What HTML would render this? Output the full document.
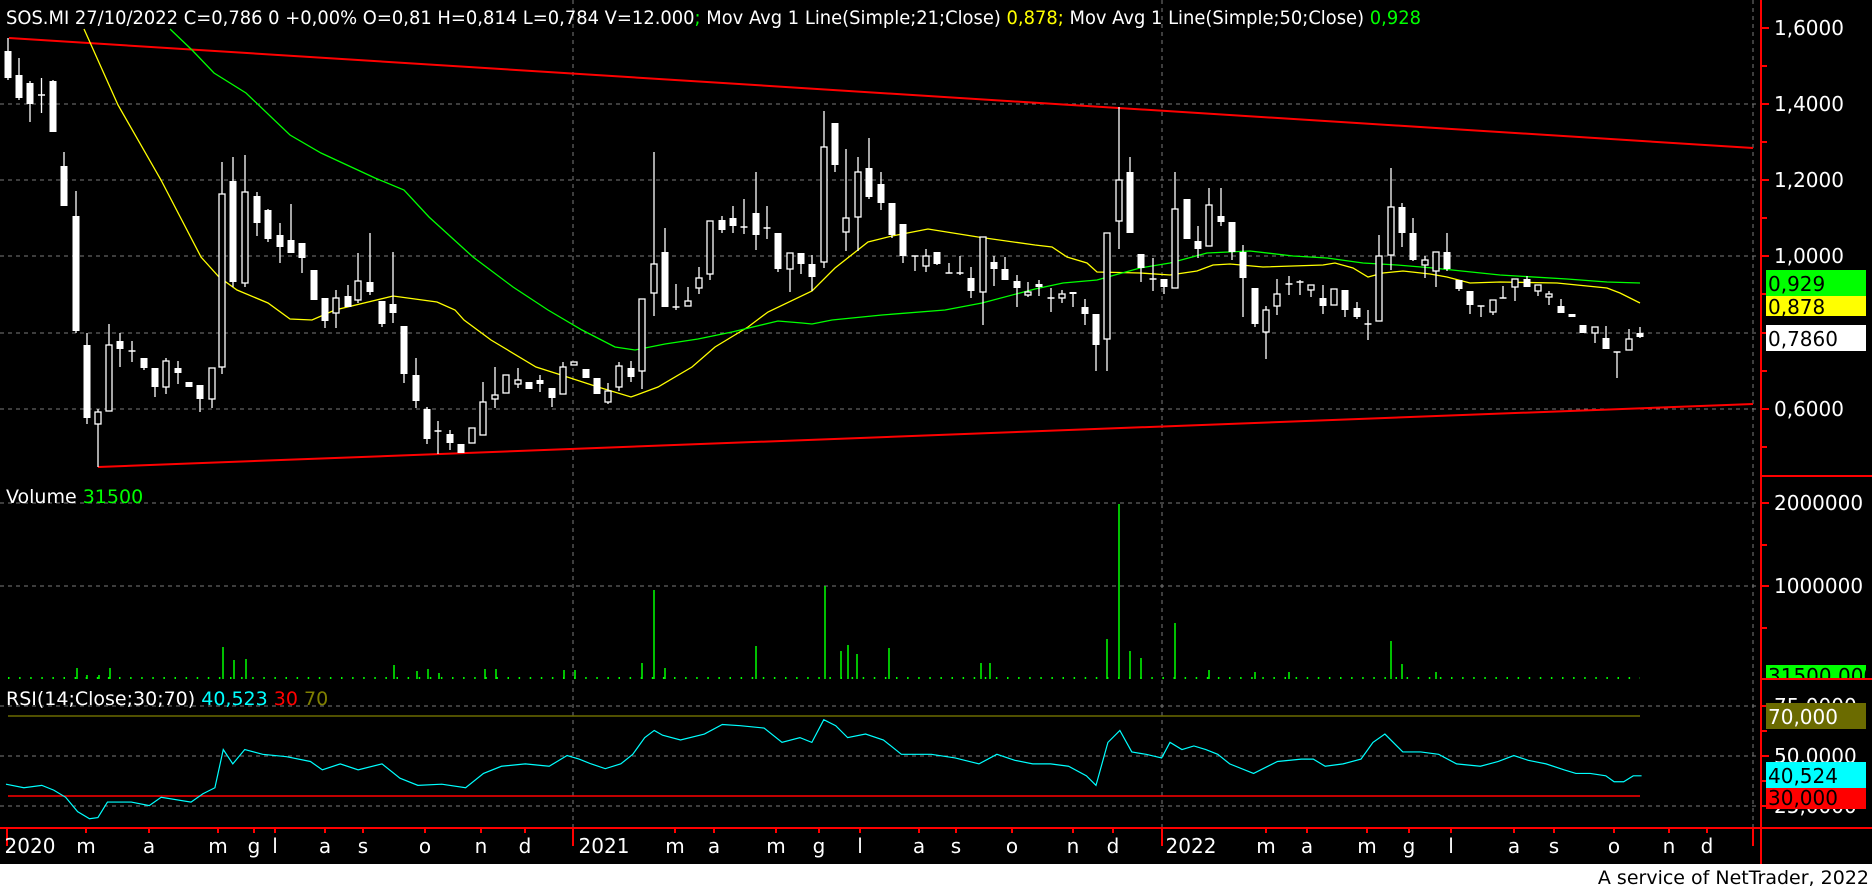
<!DOCTYPE html>
<html><head><meta charset="utf-8"><style>
html,body{margin:0;padding:0;background:#fff;}
svg{display:block}
.f{fill:#fff}
.h{fill:#000;stroke:#fff;stroke-width:1.3}
text{font-family:"DejaVu Sans","Liberation Sans",sans-serif}
</style></head><body>
<svg width="1872" height="888" viewBox="0 0 1872 888" xmlns="http://www.w3.org/2000/svg">
<rect x="0" y="0" width="1872" height="864" fill="#000"/>
<rect x="0" y="864" width="1872" height="24" fill="#fff"/>
<!-- grid -->
<g stroke="#7a7a7a" stroke-width="1" stroke-dasharray="4 4" fill="none">
<path d="M0 104H1761M0 180H1761M0 256H1761M0 333H1761M0 409H1761M0 503H1761M0 586H1761M0 706H1761M0 756H1761M0 806H1761"/>
<path d="M573 0V828M1162 0V828M1753 0V828"/>
</g>
<!-- axes -->
<g stroke="#f00" stroke-width="2" fill="none">
<path d="M1761 0V864"/>
<path d="M1761 476H1872M1761 679H1872M0 828H1872"/>
<path d="M1761 28h8M1761 66h6M1761 104h8M1761 142h6M1761 180h8M1761 218h6M1761 256h8M1761 294h6M1761 333h8M1761 371h6M1761 409h8M1761 447h6M1761 503h8M1761 545h6M1761 586h8M1761 628h6M1761 706h8M1761 731h6M1761 756h8M1761 781h6M1761 806h8"/>
<path d="M7 828v18M86 828v5M149 828v5M218 828v5M254 828v5M275 828v5M325 828v5M363 828v5M425 828v5M481 828v5M525 828v5M573 828v18M675 828v5M714 828v5M776 828v5M819 828v5M860 828v5M919 828v5M956 828v5M1012 828v5M1073 828v5M1113 828v5M1162 828v18M1266 828v5M1307 828v5M1367 828v5M1409 828v5M1451 828v5M1514 828v5M1554 828v5M1614 828v5M1669 828v5M1707 828v5M1753 828v18"/>
</g>
<!-- channel lines -->
<path d="M9 38L1753 148" stroke="#f00" stroke-width="2"/>
<path d="M98 467L1753 404" stroke="#f00" stroke-width="2"/>
<!-- MAs -->
<polyline fill="none" stroke="#ff0" stroke-width="1.3" points="84,29 118,105 161,180 201,257 219,277 237,290 268,303 290,319 312,320 335,310 393,296 437,302 455,310 464,320 491,340 536,367 558,374 598,387 631,397 658,387 692,367 715,347 748,327 768,312 812,291 835,268 868,242 892,236 928,229 978,237 1035,245 1052,247 1067,257 1087,263 1097,272 1140,273 1170,275 1197,271 1213,265 1230,264 1263,267 1323,265 1335,263 1353,268 1368,277 1383,273 1403,271 1430,274 1447,277 1470,283 1500,282 1557,283 1607,288 1620,293 1640,303"/>
<polyline fill="none" stroke="#0f0" stroke-width="1.3" points="170,29 192,50 214,73 246,93 290,135 321,153 375,178 404,190 429,217 473,257 513,287 548,310 582,330 615,347 635,350 665,344 698,339 732,332 778,321 802,323 812,324 832,320 882,315 945,310 982,303 1035,289 1063,283 1097,280 1140,268 1170,263 1207,253 1250,251 1293,256 1327,258 1363,263 1397,265 1433,268 1500,275 1567,279 1607,282 1640,283"/>
<!-- wicks -->
<path stroke="#fff" stroke-width="1.3" fill="none" d="M8 38V80M19 58V100M30 81V122M41.5 78V113M53 80V132M64 152V206M76 191V333M87 333V424M98 409V467M109 324V411M120 333V367M132 341V362M144 358V370M155 368V397M166 358V394M178 361V384M189 382V387M200 385V412M212 368V408M222 162V374M233 157V287M245 155V287M257 192V236M268 209V242M280 223V263M291 204V253M302 243V273M314 270V300M325 298V328M336 290V328M348 285V307M358 253V303M370 233V295M382 301V327M393 252V323M404 326V383M416 358V408M427 407V444M438 421V454M450 430V450M461 444V453M472 428V443M483 382V435M495 367V408M506 375V393
M518 368V388M529 382V389M540 375V392M552 388V407M563 362V394M574 362V365M586 369V378M597 378V394M608 383V404M619 362V391M631 361V382M642 299V389M654 152V316M665 228V307M676 284V310M688 287V306M699 267V294M710 221V280M722 216V233M733 206V233M744 199V234M756 172V250M767 206V239M778 233V272M790 253V292M801 253V274M812 255V291M824 111V268M835 123V172M846 149V251M858 157V251M869 138V199M881 172V210M892 203V238M903 224V263M915 256V271M926 249V272M937 252V265M949 263V273M960 256V275M971 267V298M983 237V325M994 256V286M1005 257V280M1017 275V307M1028 282V297M1039 280V296M1051 288V312M1062 290V303M1073 292V307M1085 299V325M1096 314V371M1107 233V371M1119 107V249M1130 157V233M1141 254V282M1153 258V291M1164 279V294M1175 172V288M1187 199V239M1198 226V258M1209 188V246M1221 188V226M1232 222V260M1243 245V317M1255 288V327M1266 306V359M1277 279V315M1289 276V295M1300 280V295M1311 285V297M1323 285V314M1334 289V305M1345 290V317M1357 302V319M1368 310V340M1379 235V321M1391 168V270M1402 203V247M1413 218V261M1425 256V278M1436 252V287M1447 233V271M1459 280V291M1470 291V314M1481 306V317M1493 300V315M1503 286V298M1515 279V301M1527 276V287M1538 285V296M1549 291V305M1561 299V313M1572 314V316M1583 325V333M1595 327V343M1606 326V349M1617 352V378M1629 329V350M1640 327V338"/>
<!-- crosses -->
<path stroke="#fff" stroke-width="1.5" d="M38 95h7M128.5 351h7M434.5 431h7M672.5 307h7M740.5 227h7M763.5 228h7M911.5 256h7M945.5 273h7M956.5 273h7M1047.5 298h7M1149.5 279h7M1285.5 284h7M1296.5 282h7M1364.5 324h7M1477.5 306h7M1499.5 298h7M1613.5 352h7"/>
<!-- filled bodies -->
<g class="f">
<rect x="4.5" y="51" width="7" height="27"/><rect x="15.5" y="75" width="7" height="23"/><rect x="26.5" y="83" width="7" height="21"/><rect x="49.5" y="81" width="7" height="51"/><rect x="60.5" y="166" width="7" height="40"/><rect x="72.5" y="216" width="7" height="115"/><rect x="83.5" y="345" width="7" height="73"/><rect x="116.5" y="341" width="7" height="8"/><rect x="140.5" y="358" width="7" height="10"/><rect x="151.5" y="368" width="7" height="19"/><rect x="174.5" y="368" width="7" height="5"/><rect x="185.5" y="382" width="7" height="5"/><rect x="196.5" y="385" width="7" height="14"/><rect x="229.5" y="181" width="7" height="101"/><rect x="253.5" y="196" width="7" height="27"/><rect x="264.5" y="210" width="7" height="29"/><rect x="276.5" y="235" width="7" height="12"/><rect x="287.5" y="240" width="7" height="13"/><rect x="298.5" y="243" width="7" height="15"/><rect x="310.5" y="270" width="7" height="30"/><rect x="321.5" y="298" width="7" height="23"/><rect x="344.5" y="296" width="7" height="11"/><rect x="366.5" y="282" width="7" height="10"/><rect x="378.5" y="301" width="7" height="23"/><rect x="389.5" y="304" width="7" height="9"/><rect x="400.5" y="326" width="7" height="48"/><rect x="412.5" y="375" width="7" height="26"/><rect x="423.5" y="409" width="7" height="30"/><rect x="446.5" y="434" width="7" height="9"/><rect x="457.5" y="444" width="7" height="9"/>
<rect x="525.5" y="382" width="7" height="7"/><rect x="536.5" y="380" width="7" height="4"/><rect x="548.5" y="388" width="7" height="10"/><rect x="582.5" y="369" width="7" height="9"/><rect x="593.5" y="378" width="7" height="16"/><rect x="627.5" y="368" width="7" height="9"/><rect x="661.5" y="252" width="7" height="55"/><rect x="718.5" y="220" width="7" height="10"/><rect x="729.5" y="218" width="7" height="8"/><rect x="752.5" y="213" width="7" height="22"/><rect x="774.5" y="233" width="7" height="36"/><rect x="797.5" y="253" width="7" height="11"/><rect x="808.5" y="264" width="7" height="13"/><rect x="831.5" y="123" width="7" height="42"/><rect x="865.5" y="168" width="7" height="29"/><rect x="877.5" y="184" width="7" height="19"/><rect x="888.5" y="203" width="7" height="32"/><rect x="899.5" y="224" width="7" height="32"/><rect x="933.5" y="252" width="7" height="12"/><rect x="967.5" y="278" width="7" height="13"/><rect x="990.5" y="262" width="7" height="7"/><rect x="1001.5" y="269" width="7" height="11"/><rect x="1013.5" y="281" width="7" height="7"/><rect x="1035.5" y="284" width="7" height="3"/><rect x="1069.5" y="292" width="7" height="2"/><rect x="1081.5" y="307" width="7" height="7"/><rect x="1092.5" y="314" width="7" height="31"/><rect x="1126.5" y="172" width="7" height="61"/><rect x="1137.5" y="254" width="7" height="14"/><rect x="1160.5" y="279" width="7" height="8"/><rect x="1183.5" y="199" width="7" height="40"/><rect x="1194.5" y="241" width="7" height="8"/><rect x="1217.5" y="216" width="7" height="6"/><rect x="1228.5" y="222" width="7" height="30"/><rect x="1239.5" y="252" width="7" height="26"/><rect x="1251.5" y="288" width="7" height="36"/><rect x="1319.5" y="298" width="7" height="8"/><rect x="1341.5" y="290" width="7" height="20"/><rect x="1353.5" y="308" width="7" height="9"/><rect x="1398.5" y="207" width="7" height="26"/><rect x="1409.5" y="233" width="7" height="27"/><rect x="1443.5" y="252" width="7" height="17"/><rect x="1455.5" y="280" width="7" height="9"/><rect x="1466.5" y="291" width="7" height="14"/><rect x="1523.5" y="279" width="7" height="8"/><rect x="1557.5" y="306" width="7" height="7"/><rect x="1568.5" y="314" width="7" height="3"/><rect x="1579.5" y="325" width="7" height="8"/><rect x="1602.5" y="338" width="7" height="11"/><rect x="1636.5" y="333" width="7" height="4"/>
</g>
<!-- hollow bodies -->
<g class="h">
<rect x="95" y="412" width="6" height="12"/><rect x="106" y="345" width="6" height="66"/><rect x="163" y="361" width="6" height="26"/><rect x="209" y="368" width="6" height="31"/><rect x="219" y="194" width="6" height="173"/><rect x="242" y="192" width="6" height="91"/><rect x="333" y="298" width="6" height="15"/><rect x="355" y="281" width="6" height="19"/><rect x="469" y="428" width="6" height="15"/><rect x="480" y="402" width="6" height="33"/><rect x="492" y="395" width="6" height="4"/><rect x="503" y="375" width="6" height="18"/>
<rect x="515" y="380" width="6" height="4"/><rect x="560" y="367" width="6" height="27"/><rect x="571" y="362" width="6" height="3"/><rect x="605" y="391" width="6" height="11"/><rect x="616" y="366" width="6" height="21"/><rect x="639" y="299" width="6" height="72"/><rect x="651" y="264" width="6" height="29"/><rect x="685" y="301" width="6" height="5"/><rect x="696" y="278" width="6" height="10"/><rect x="707" y="221" width="6" height="53"/><rect x="787" y="253" width="6" height="16"/><rect x="821" y="147" width="6" height="115"/><rect x="843" y="218" width="6" height="14"/><rect x="855" y="172" width="6" height="45"/><rect x="923" y="256" width="6" height="10"/><rect x="980" y="237" width="6" height="55"/><rect x="1025" y="292" width="6" height="3"/><rect x="1059" y="294" width="6" height="4"/><rect x="1104" y="233" width="6" height="106"/><rect x="1116" y="180" width="6" height="41"/><rect x="1172" y="209" width="6" height="79"/><rect x="1206" y="205" width="6" height="41"/><rect x="1263" y="310" width="6" height="22"/><rect x="1274" y="294" width="6" height="12"/><rect x="1308" y="285" width="6" height="5"/><rect x="1331" y="289" width="6" height="16"/><rect x="1376" y="256" width="6" height="65"/><rect x="1388" y="207" width="6" height="48"/><rect x="1422" y="260" width="6" height="5"/><rect x="1433" y="252" width="6" height="19"/><rect x="1490" y="300" width="6" height="12"/><rect x="1512" y="279" width="6" height="8"/><rect x="1535" y="285" width="6" height="6"/><rect x="1546" y="294" width="6" height="3"/><rect x="1592" y="327" width="6" height="6"/><rect x="1626" y="339" width="6" height="11"/>
</g>
<!-- volume -->
<line x1="8" y1="678" x2="1640" y2="678" stroke="#0f0" stroke-width="2" stroke-dasharray="1.5 9.6"/>
<path stroke="#0f0" stroke-width="1.5" d="M77 679V668M87 679V675M99 679V675M110 679V668M223 679V647M234 679V660M246 679V659M394 679V665M417 679V671M428 679V669M439 679V673M485 679V669M496 679V669M564 679V670M575 679V670M642 679V663M654 679V590M665 679V668M756 679V646M825 679V586M841 679V651M848 679V645M857 679V654M889 679V648M981 679V663M990 679V663M1107 679V639M1119 679V504M1130 679V651M1141 679V658M1175 679V623M1209 679V670M1391 679V641M1402 679V664M1436 679V672M1255 679V672M1289 679V672"/>
<!-- RSI -->
<line x1="8" y1="716" x2="1640" y2="716" stroke="#6b6b00" stroke-width="1.5"/>
<line x1="8" y1="796" x2="1640" y2="796" stroke="#f00" stroke-width="1.5"/>
<g transform="scale(1.19388,1.19355)">
<polyline fill="none" stroke="#0ff" stroke-width="1" points="5,657 20,660 35,658 45,662 55,668 65,680 75,686 82,685 90,672 110,672 125,675 135,668 160,672 170,665 180,660 187,628 195,640 205,628 220,632 240,634 260,638 270,645 285,640 300,645 320,640 335,652 350,658 370,657 390,660 405,648 420,642 440,640 460,642 475,633 485,636 495,640 507,644 520,640 530,632 540,618 548,612 555,616 570,620 590,615 605,607 620,608 640,610 655,622 670,618 680,622 690,603 700,608 710,618 725,615 740,620 755,632 780,632 800,635 820,640 835,632 850,637 865,640 880,640 895,642 910,650 918,658 928,622 938,612 948,630 960,632 973,635 980,622 990,628 1000,625 1010,628 1020,632 1030,640 1050,648 1070,638 1090,636 1100,636 1110,642 1125,640 1140,636 1150,622 1160,615 1175,630 1190,630 1205,632 1220,640 1240,642 1255,638 1268,633 1280,637 1295,640 1310,645 1320,648 1332,648 1345,650 1352,655 1360,655 1368,650 1375,650"/>
</g>
<!-- header -->
<text x="6" y="24" font-size="19" fill="#fff" textLength="1415" lengthAdjust="spacingAndGlyphs">SOS.MI 27/10/2022 C=0,786 0 +0,00% O=0,81 H=0,814 L=0,784 V=12.000<tspan fill="#0f0">;</tspan> Mov Avg 1 Line(Simple;21;Close) <tspan fill="#ff0">0,878</tspan><tspan fill="#ff0">;</tspan> Mov Avg 1 Line(Simple;50;Close) <tspan fill="#0f0">0,928</tspan></text>
<text x="6" y="503" font-size="19" fill="#fff">Volume <tspan fill="#0f0">31500</tspan></text>
<text x="6" y="705" font-size="19" fill="#fff">RSI(14;Close;30;70) <tspan fill="#0ff">40,523</tspan> <tspan fill="#f00">30</tspan> <tspan fill="#808000">70</tspan></text>
<!-- right labels -->
<g font-size="20" fill="#fff">
<text x="1774" y="35">1,6000</text><text x="1774" y="111">1,4000</text><text x="1774" y="187">1,2000</text><text x="1774" y="263">1,0000</text><text x="1774" y="416">0,6000</text>
<text x="1774" y="510">2000000</text><text x="1774" y="593">1000000</text>
<text x="1774" y="713">75,0000</text><text x="1774" y="763">50,0000</text><text x="1774" y="813">25,0000</text>
</g>
<rect x="1766" y="270" width="100" height="26" fill="#0f0"/><text x="1768" y="291" font-size="20" fill="#000">0,929</text>
<rect x="1766" y="296" width="100" height="20" fill="#ff0"/><text x="1768" y="314" font-size="20" fill="#000">0,878</text>
<rect x="1766" y="325" width="100" height="26" fill="#fff"/><text x="1768" y="346" font-size="20" fill="#000">0,7860</text>
<rect x="1766" y="665" width="100" height="13" fill="#0f0"/><text x="1768" y="683" font-size="20" fill="#000" clip-path="url(#c1)">31500,000</text>
<clipPath id="c1"><rect x="1766" y="665" width="100" height="13"/></clipPath>
<rect x="1766" y="703" width="100" height="26" fill="#6b6b00"/><text x="1768" y="724" font-size="20" fill="#fff">70,000</text>
<rect x="1766" y="762" width="100" height="26" fill="#0ff"/><text x="1768" y="783" font-size="20" fill="#000">40,524</text>
<rect x="1766" y="788" width="100" height="21" fill="#f00"/><text x="1768" y="805" font-size="20" fill="#000">30,000</text>
<!-- month labels -->
<g font-size="20" fill="#fff" text-anchor="middle">
<text x="30" y="853">2020</text><text x="86" y="853">m</text><text x="149" y="853">a</text><text x="218" y="853">m</text><text x="254" y="853">g</text><text x="275" y="853">l</text><text x="325" y="853">a</text><text x="363" y="853">s</text><text x="425" y="853">o</text><text x="481" y="853">n</text><text x="525" y="853">d</text>
<text x="604" y="853">2021</text><text x="675" y="853">m</text><text x="714" y="853">a</text><text x="776" y="853">m</text><text x="819" y="853">g</text><text x="860" y="853">l</text><text x="919" y="853">a</text><text x="956" y="853">s</text><text x="1012" y="853">o</text><text x="1073" y="853">n</text><text x="1113" y="853">d</text>
<text x="1191" y="853">2022</text><text x="1266" y="853">m</text><text x="1307" y="853">a</text><text x="1367" y="853">m</text><text x="1409" y="853">g</text><text x="1451" y="853">l</text><text x="1514" y="853">a</text><text x="1554" y="853">s</text><text x="1614" y="853">o</text><text x="1669" y="853">n</text><text x="1707" y="853">d</text>
</g>
<text x="1869" y="884" font-size="19" fill="#000" text-anchor="end">A service of NetTrader, 2022</text>
</svg>
</body></html>
